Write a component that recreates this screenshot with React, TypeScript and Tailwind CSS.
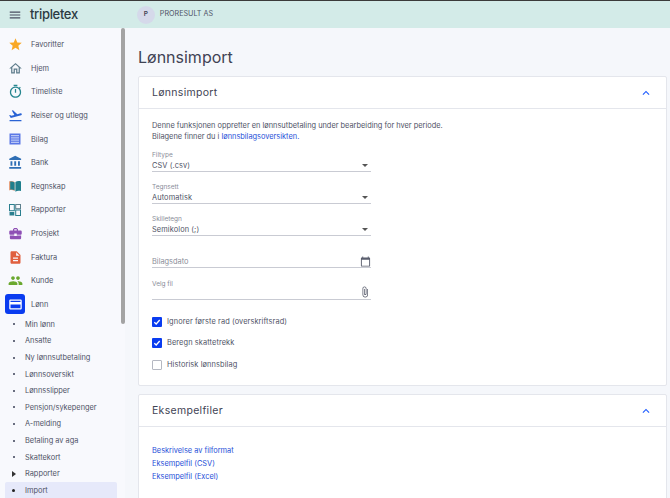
import { ReactNode } from "react";

function Icon({ d, size = 15, color, className }: { d: string; size?: number; color: string; className?: string }) {
  return (
    <svg width={size} height={size} viewBox="0 0 24 24" fill={color} className={className}>
      <path d={d} />
    </svg>
  );
}

function BilagIcon() {
  return (
    <svg width="12" height="12" viewBox="0 0 12 12">
      <rect x="0.5" y="0.5" width="11" height="11" fill="#5b78e6" />
      <path d="M2 2.7h8M2 4.9h8M2 7.1h8M2 9.3h8" stroke="#dfe5fb" strokeWidth="0.9" />
    </svg>
  );
}

function BookIcon() {
  return (
    <svg width="14" height="12" viewBox="0 0 14 12">
      <path d="M1 1.5c2-.8 4-.6 5.600.6v9c-1.600-1.100-3.600-1.300-5.600-.6z" fill="#e8a27f" />
      <path d="M2.200 1.600c1.500-.3 3-.1 4.400.8v8.100C5.200 9.600 3.700 9.400 2.200 9.700z" fill="#1f7f8c" />
      <path d="M7.400 2.100c1.600-1.200 3.600-1.400 5.600-.6v9.600c-2-.7-4-.5-5.600.6z" fill="#1f7f8c" />
    </svg>
  );
}

function ReportIcon() {
  return (
    <svg width="12" height="12" viewBox="0 0 12 12">
      <rect x="0.5" y="0.5" width="4.800" height="6.200" fill="none" stroke="#2a7f8f" />
      <rect x="6.700" y="0.500" width="4.800" height="4.200" fill="none" stroke="#5d7f8c" />
      <rect x="0.500" y="8" width="4.800" height="3.500" fill="#2a7f8f" />
      <rect x="6.700" y="6" width="4.800" height="5.500" fill="none" stroke="#2a7f8f" />
    </svg>
  );
}

const mainNav = [
  { label: "Favoritter", icon: <Icon color="#f9a825" d="M12 17.27L18.18 21l-1.64-7.03L22 9.24l-7.19-.61L12 2 9.19 8.63 2 9.24l5.46 4.73L5.82 21z" /> },
  { label: "Hjem", icon: <Icon color="#5f7d8c" d="M12 5.69l5 4.5V18h-2v-6H9v6H7v-7.81l5-4.5M12 3L2 12h3v8h6v-6h2v6h6v-8h3L12 3z" /> },
  { label: "Timeliste", icon: <Icon color="#26868f" d="M15 1H9v2h6V1zm-4 13h2V8h-2v6zm8.03-6.61l1.42-1.42c-.43-.51-.9-.99-1.41-1.41l-1.42 1.42C16.07 4.74 14.12 4 12 4c-4.97 0-9 4.03-9 9s4.02 9 9 9 9-4.03 9-9c0-2.12-.74-4.07-1.97-5.61zM12 20c-3.87 0-7-3.13-7-7s3.13-7 7-7 7 3.13 7 7-3.13 7-7 7z" /> },
  { label: "Reiser og utlegg", icon: <Icon color="#2a63d4" d="M2.5 19h19v2h-19v-2zm19.57-9.36c-.21-.8-1.04-1.28-1.84-1.06L14.92 10l-6.9-6.43-1.93.51 4.14 7.17-4.97 1.33-1.97-1.54-1.45.39 2.59 4.49L21 11.49c.81-.23 1.28-1.05 1.07-1.85z" /> },
  { label: "Bilag", icon: <BilagIcon /> },
  { label: "Bank", icon: <Icon color="#2f6fb5" d="M4 10v7h3v-7H4zm6 0v7h3v-7h-3zM2 22h19v-3H2v3zm14-12v7h3v-7h-3zm-4.5-9L2 6v2h19V6l-9.5-5z" /> },
  { label: "Regnskap", icon: <BookIcon /> },
  { label: "Rapporter", icon: <ReportIcon /> },
  { label: "Prosjekt", icon: <Icon color="#8e4fb5" d="M10 16v-1H3.01L3 19c0 1.11.89 2 2 2h14c1.11 0 2-.89 2-2v-4h-7v1h-4zm10-9h-4.01V5l-2-2h-4l-2 2v2H4c-1.1 0-2 .9-2 2v3c0 1.11.89 2 2 2h6v-2h4v2h6c1.1 0 2-.9 2-2V9c0-1.1-.9-2-2-2zm-6 0h-4V5h4v2z" /> },
  { label: "Faktura", icon: <Icon color="#e0603f" d="M14 2H6c-1.1 0-1.99.9-1.99 2L4 20c0 1.1.89 2 1.99 2H18c1.1 0 2-.9 2-2V8l-6-6zm2 16H8v-2h8v2zm0-4H8v-2h8v2zm-3-5V3.5L18.5 9H13z" /> },
  { label: "Kunde", icon: <Icon color="#6aa82e" d="M16 11c1.66 0 2.99-1.34 2.99-3S17.66 5 16 5c-1.66 0-3 1.34-3 3s1.34 3 3 3zm-8 0c1.66 0 2.99-1.34 2.99-3S9.66 5 8 5C6.34 5 5 6.34 5 8s1.34 3 3 3zm0 2c-2.33 0-7 1.17-7 3.5V19h14v-2.5c0-2.33-4.67-3.5-7-3.5zm8 0c-.29 0-.62.02-.97.05 1.16.84 1.97 1.97 1.97 3.45V19h6v-2.5c0-2.33-4.67-3.5-7-3.5z" /> },
];

const subNav = ["Min lønn", "Ansatte", "Ny lønnsutbetaling", "Lønnsoversikt", "Lønnsslipper", "Pensjon/sykepenger", "A-melding", "Betaling av aga", "Skattekort"];

function NavRow({ icon, label }: { icon: ReactNode; label: string }) {
  return (
    <div className="flex h-[23.6px] items-center">
      <span className="flex w-[31px] justify-center pr-[1px]">{icon}</span>
      <span className="text-[7.4px] text-[#4f5366]">{label}</span>
    </div>
  );
}

function SubRow({ label, bullet }: { label: string; bullet?: ReactNode }) {
  return (
    <div className="flex h-[16.6px] items-center">
      <span className="flex w-[25px] justify-center pl-[2px]">{bullet ?? <span className="size-[2px] bg-[#6a6e80]" />}</span>
      <span className="text-[7.4px] text-[#4f5366]">{label}</span>
    </div>
  );
}

function SelectField({ label, value }: { label: string; value: string }) {
  return (
    <div className="w-[219px] border-b border-[#c9cbd3]">
      <div className="text-[6.5px] leading-[9px] text-[#8a8d99]">{label}</div>
      <div className="flex h-[11px] items-center justify-between pr-[3px] text-[7.4px] tracking-[0.1px] text-[#4f5366]">
        <span>{value}</span>
        <span className="h-0 w-0 border-x-[3px] border-t-[3px] border-x-transparent border-t-[#555]" />
      </div>
    </div>
  );
}

function CheckRow({ label, checked }: { label: string; checked?: boolean }) {
  return (
    <div className="flex h-[10px] items-center gap-[5px]">
      {checked ? (
        <span className="flex size-[10px] items-center justify-center rounded-[1px] bg-[#0a3cf0]">
          <svg width="8" height="8" viewBox="0 0 8 8" fill="none" stroke="#fff" strokeWidth="1.300">
            <path d="M1.300 4.200l1.900 1.800 3.500-4" />
          </svg>
        </span>
      ) : (
        <span className="size-[10px] rounded-[1px] border border-[#b5b8c2] bg-white" />
      )}
      <span className="text-[7.4px] tracking-[0.1px] text-[#4f5366]">{label}</span>
    </div>
  );
}

function CardHeader({ title }: { title: string }) {
  return (
    <div className="flex h-[32px] items-center justify-between border-b border-[#e4e6ec] pl-[13px] pr-[13px]">
      <span className="text-[10.5px] tracking-[0.3px] text-[#3f4354]">{title}</span>
      <Icon size={14} color="#1f5cff" d="M12 8l-6 6 1.41 1.41L12 10.83l4.59 4.58L18 14z" />
    </div>
  );
}

export default function App() {
  return (
    <div className="flex h-[498px] w-[670px] flex-col overflow-hidden bg-[#f5f7fb] font-['Inter',sans-serif]">
      <header className="flex h-[28px] items-center border-t border-[#3a3a3a] bg-[#d3ebe8]">
        <span className="flex w-[30px] justify-center">
          <Icon size={14} color="#4a4e60" d="M3 18h18v-2H3v2zm0-5h18v-2H3v2zm0-7v2h18V6H3z" />
        </span>
        <span className="text-[13px] font-medium tracking-tight text-[#2b3a42]">tripletex</span>
        <span className="ml-[59px] flex size-[18px] items-center justify-center rounded-full bg-[#d5d9ea] text-[6.5px] font-semibold text-[#3f4354]">P</span>
        <span className="ml-[5px] text-[7.2px] text-[#4f5366]">PRORESULT AS</span>
      </header>

      <div className="flex min-h-0 flex-1">
        <aside className="relative w-[125px] shrink-0 bg-[#f8f9fd] pt-[5px]">
          {mainNav.map((n) => (
            <NavRow key={n.label} icon={n.icon} label={n.label} />
          ))}
          <NavRow
            label="Lønn"
            icon={
              <span className="flex size-[20px] items-center justify-center rounded-[3px] bg-[#0a3cf0]">
                <Icon size={15} color="#fff" d="M20 4H4c-1.11 0-1.99.89-1.99 2L2 18c0 1.11.89 2 2 2h16c1.11 0 2-.89 2-2V6c0-1.11-.89-2-2-2zm0 14H4v-6h16v6zm0-10H4V6h16v2z" />
              </span>
            }
          />
          <div>
            {subNav.map((s) => (
              <SubRow key={s} label={s} />
            ))}
            <SubRow label="Rapporter" bullet={<span className="h-0 w-0 border-y-[3px] border-l-[4px] border-y-transparent border-l-[#333]" />} />
            <div className="ml-[5px] mr-[8px] h-[20px] rounded-[2px] bg-[#e6e9fa]">
              <div className="-ml-[5px]">
                <SubRow label="Import" bullet={<span className="size-[3px] rounded-full bg-[#222]" />} />
              </div>
            </div>
          </div>
          <span className="absolute right-0 top-0 h-[296px] w-[4px] rounded-full bg-[#a3a3a3]" />
        </aside>

        <main className="min-w-0 flex-1 pl-[13px] pr-[3px]">
          <h1 className="mt-[17px] h-[31px] text-[16px] leading-[24px] text-[#3f4354]">Lønnsimport</h1>

          <section className="h-[310px] rounded-[2px] border border-[#e4e6ec] bg-white">
            <CardHeader title="Lønnsimport" />
            <div className="px-[13px] pt-[11px]">
              <p className="text-[7.4px] leading-[11px] text-[#4f5366]">
                Denne funksjonen oppretter en lønnsutbetaling under bearbeiding for hver periode.
                <br />
                Bilagene finner du i <span className="text-[#1f4fd8]">lønnsbilagsoversikten.</span>
              </p>
              <div className="mt-[9px] flex flex-col gap-[11px]">
                <SelectField label="Filtype" value="CSV (.csv)" />
                <SelectField label="Tegnsett" value="Automatisk" />
                <SelectField label="Skilletegn" value="Semikolon (;)" />
              </div>
              <div className="mt-[12px] flex h-[20px] w-[219px] items-end justify-between border-b border-[#c9cbd3]">
                <span className="text-[7.4px] leading-[11px] text-[#8a8d99]">Bilagsdato</span>
                <Icon size={11} color="#5a5e6e" d="M20 3h-1V1h-2v2H7V1H5v2H4c-1.1 0-2 .9-2 2v16c0 1.100.9 2 2 2h16c1.100 0 2-.9 2-2V5c0-1.100-.9-2-2-2zm0 18H4V8h16v13z" />
              </div>
              <div className="mt-[11.5px] flex h-[20.5px] w-[219px] items-start justify-between border-b border-[#c9cbd3]">
                <span className="text-[6.5px] leading-[9px] text-[#8a8d99]">Velg fil</span>
                <Icon size={12} color="#5a5e6e" className="mt-[6px]" d="M16.5 6v11.5c0 2.21-1.79 4-4 4s-4-1.79-4-4V5c0-1.38 1.12-2.5 2.5-2.5s2.5 1.12 2.5 2.5v10.5c0 .55-.45 1-1 1s-1-.45-1-1V6H10v9.5c0 1.38 1.12 2.5 2.5 2.5s2.5-1.12 2.5-2.5V5c0-2.21-1.79-4-4-4S7 2.79 7 5v12.5c0 3.04 2.46 5.5 5.5 5.5s5.5-2.46 5.5-5.5V6h-1.5z" />
              </div>
              <div className="mt-[16.5px] flex flex-col gap-[11.5px]">
                <CheckRow checked label="Ignorer første rad (overskriftsrad)" />
                <CheckRow checked label="Beregn skattetrekk" />
                <CheckRow label="Historisk lønnsbilag" />
              </div>
            </div>
          </section>

          <section className="mt-[8px] h-[120px] rounded-[2px] border border-[#e4e6ec] bg-white">
            <CardHeader title="Eksempelfiler" />
            <div className="flex flex-col gap-[1px] px-[13px] pt-[18px] text-[7.4px] leading-[12px] text-[#1f4fd8]">
              <span>Beskrivelse av filformat</span>
              <span>Eksempelfil (CSV)</span>
              <span>Eksempelfil (Excel)</span>
            </div>
          </section>
        </main>
      </div>
    </div>
  );
}
